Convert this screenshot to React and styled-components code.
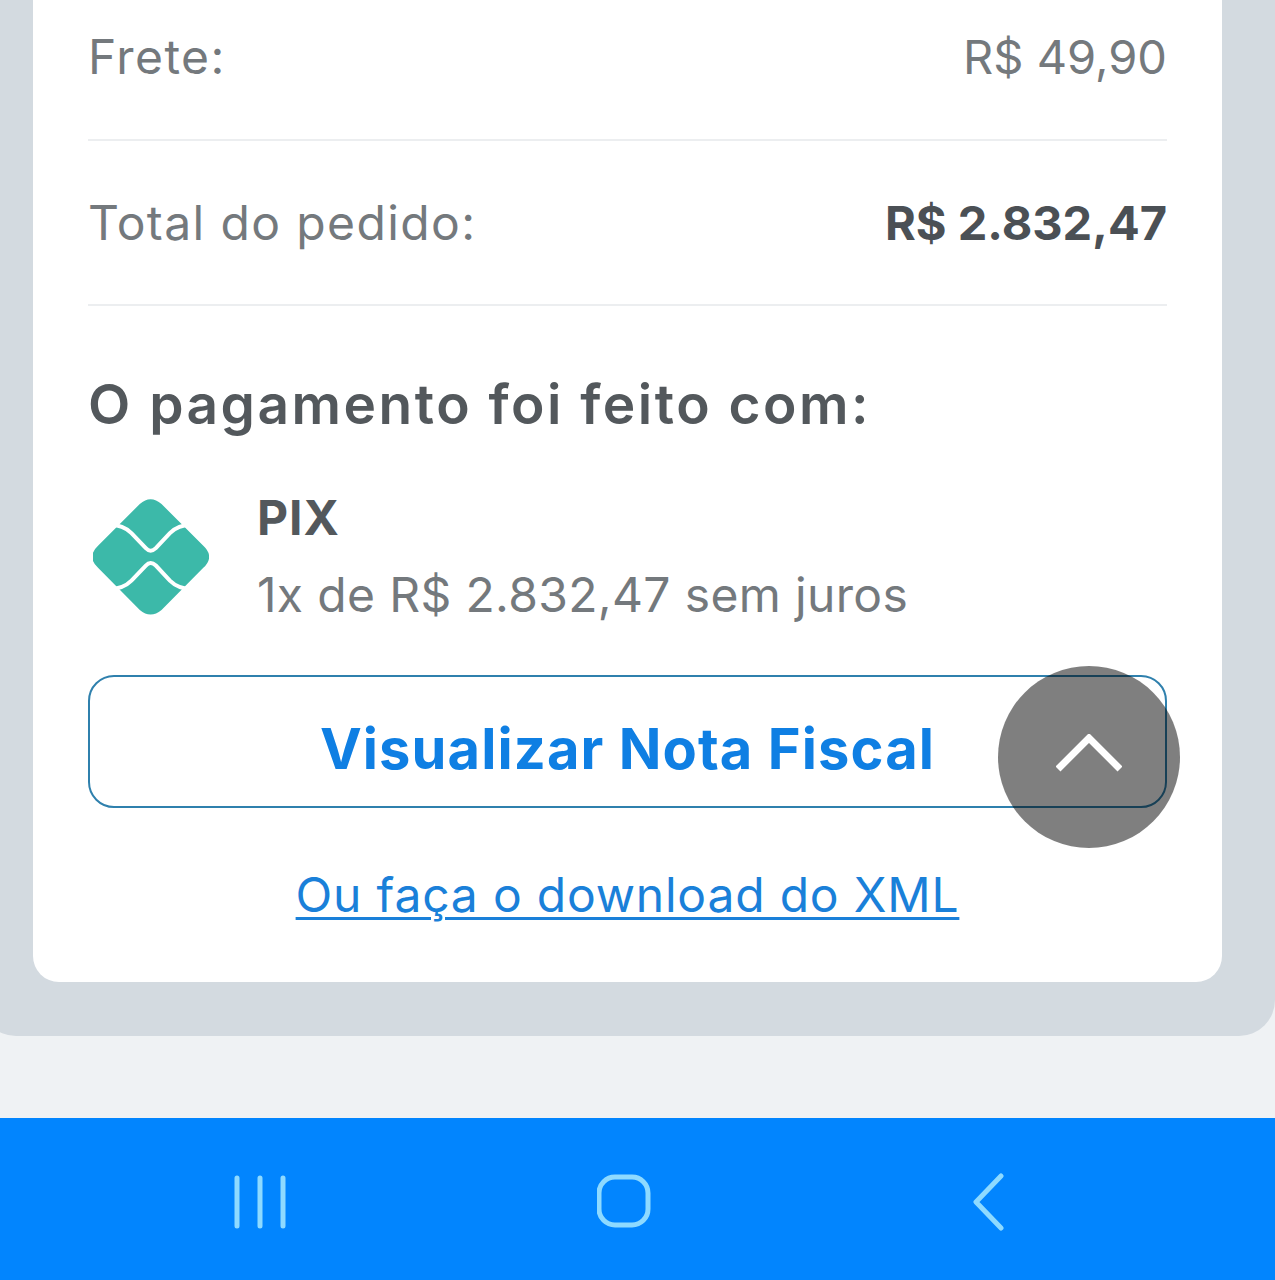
import styled, {createGlobalStyle} from "styled-components";

const GlobalStyle = createGlobalStyle`
  html, body {
    margin: 0;
    padding: 0;
    background: #eff2f4;
  }
  body {
    font-family: "Inter", "Noto Sans", sans-serif;
  }
  * {
    box-sizing: border-box;
  }
`;

const Screen = styled.div`
  position: relative;
  height: 1280px;
  overflow: hidden;
  display: flex;
  flex-direction: column;
`;

const Main = styled.main`
  flex: 1;
`;

const Panel = styled.section`
  margin-left: -20px;
  padding: 0 53px 54px 53px;
  background: #d3dae0;
  border-radius: 0 0 36px 36px;
`;

const Card = styled.div`
  background: #ffffff;
  border-radius: 0 0 26px 26px;
  padding: 0 55px;
  height: 982px;
`;

const SummaryRow = styled.div`
  display: flex;
  justify-content: space-between;
  align-items: center;
  height: ${({$height}) => $height}px;
  padding-bottom: ${({$pad}) => $pad || 0}px;
  border-bottom: 2px solid #eceef0;
  font-size: 48px;
  letter-spacing: 1.4px;
  color: #74797d;
`;

const Amount = styled.span`
  color: ${({$strong}) => ($strong ? "#4b5055" : "#74797d")};
  font-size: 47px;
  font-weight: ${({$strong}) => ($strong ? 700 : 400)};
  letter-spacing: 0;
`;

const PaymentTitle = styled.h2`
  margin: 66px 0 0;
  font-size: 55px;
  line-height: 64px;
  font-weight: 600;
  letter-spacing: 2.5px;
  color: #53585c;
`;

const PaymentMethod = styled.div`
  display: flex;
  align-items: center;
  gap: 48px;
  margin-top: 55px;
  padding-left: 5px;
`;

const MethodInfo = styled.div`
  display: flex;
  flex-direction: column;
  gap: 23px;
`;

const MethodName = styled.strong`
  font-size: 48px;
  line-height: 54px;
  font-weight: 700;
  letter-spacing: 1px;
  color: #53585c;
`;

const MethodDetail = styled.span`
  font-size: 48px;
  line-height: 54px;
  letter-spacing: 0.35px;
  color: #74797d;
`;

const OutlineButton = styled.button`
  display: block;
  width: 100%;
  height: 133px;
  margin-top: 53px;
  padding: 14px 0 0;
  background: #ffffff;
  border: 2px solid #2f80ad;
  border-radius: 26px;
  font-family: inherit;
  font-size: 56px;
  font-weight: 700;
  letter-spacing: 1.1px;
  color: #0f7fe3;
`;

const DownloadLink = styled.a`
  display: block;
  margin-top: 60px;
  text-align: center;
  font-size: 48px;
  line-height: 54px;
  letter-spacing: 0.8px;
  color: #1a80d9;
  text-decoration: underline;
  text-decoration-thickness: 3px;
  text-underline-offset: 5px;
`;

const ScrollTop = styled.div`
  position: absolute;
  left: 998px;
  top: 666px;
  width: 182px;
  height: 182px;
  padding-bottom: 8px;
  border-radius: 50%;
  background: rgba(0, 0, 0, 0.5);
  display: flex;
  align-items: center;
  justify-content: center;
`;

const NavBar = styled.nav`
  height: 162px;
  background: #0285fe;
  display: grid;
  grid-template-columns: repeat(3, 363.5px);
  justify-content: center;
  align-items: center;
  justify-items: center;
  padding: 6px 25px 0 0;
  color: #8edaff;
`;

const NavIcon = styled.svg`
  display: block;
  fill: none;
  stroke: currentColor;
  stroke-linecap: round;
  stroke-linejoin: round;
`;

function PixLogo() {
  const wave = "M150 165 Q190 165 215 190 L258 235 Q272 250 288 235 L330 190 Q355 165 395 165";
  return (
    <svg width="116" height="116" viewBox="100 88 347 347">
      <path
        d="M240 103 Q272 75 305 103 L430 228 Q465 261 430 294 L305 420 Q272 447 240 420 L115 294 Q80 261 115 228 Z"
        fill="#3cb9a9"
      />
      <g fill="none" stroke="#ffffff" strokeWidth="12">
        <path d={wave} />
        <path d={wave} transform="matrix(1 0 0 -1 0 522)" />
      </g>
    </svg>
  );
}

export default function App() {
  return (
    <Screen>
      <GlobalStyle />
      <Main>
        <Panel>
          <Card>
            <SummaryRow $height={141} $pad={26}>
              <span>Frete:</span>
              <Amount>R$ 49,90</Amount>
            </SummaryRow>
            <SummaryRow $height={165}>
              <span>Total do pedido:</span>
              <Amount $strong>R$ 2.832,47</Amount>
            </SummaryRow>
            <PaymentTitle>O pagamento foi feito com:</PaymentTitle>
            <PaymentMethod>
              <PixLogo />
              <MethodInfo>
                <MethodName>PIX</MethodName>
                <MethodDetail>1x de R$ 2.832,47 sem juros</MethodDetail>
              </MethodInfo>
            </PaymentMethod>
            <OutlineButton>Visualizar Nota Fiscal</OutlineButton>
            <DownloadLink>Ou faça o download do XML</DownloadLink>
          </Card>
        </Panel>
      </Main>
      <NavBar>
        <NavIcon width="56" height="54" viewBox="0 0 56 54" strokeWidth="5">
          <path d="M3 3V51M26 3V51M49 3V51" />
        </NavIcon>
        <NavIcon width="56" height="56" viewBox="0 0 56 56" strokeWidth="5">
          <rect x="2" y="3" width="49" height="48" rx="16" />
        </NavIcon>
        <NavIcon width="34" height="58" viewBox="0 0 34 58" strokeWidth="5">
          <path d="M29 3L4 29L29 55" />
        </NavIcon>
      </NavBar>
      <ScrollTop>
        <svg width="66" height="38" viewBox="0 0 66 38" fill="none" stroke="#ffffff" strokeWidth="7">
          <path d="M2 35L33 4L64 35" />
        </svg>
      </ScrollTop>
    </Screen>
  );
}
